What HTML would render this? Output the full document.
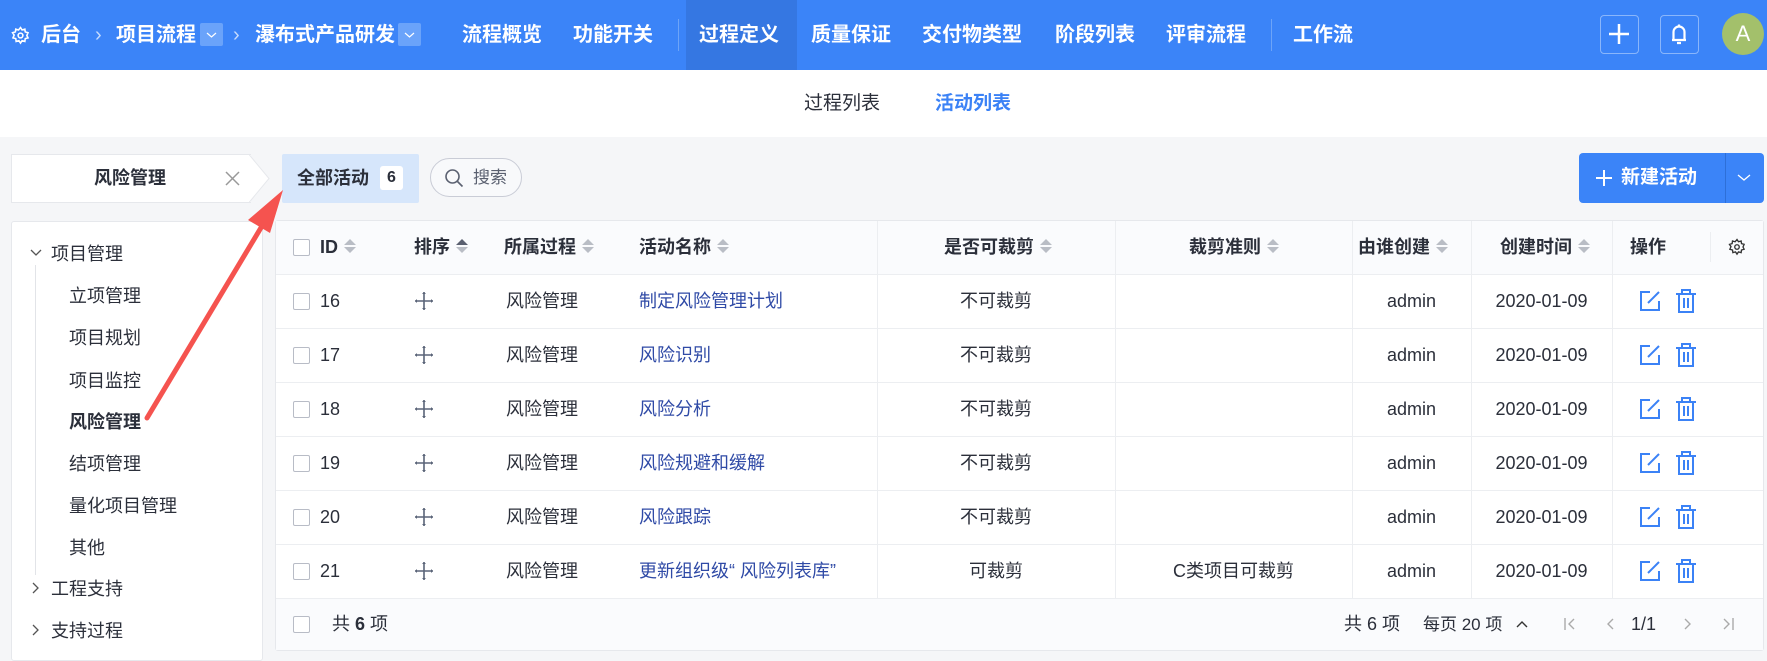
<!DOCTYPE html>
<html><head><meta charset="utf-8"><style>
*{box-sizing:border-box;margin:0;padding:0}
body{width:1767px;height:654px;overflow:hidden;background:#f5f6f8;font-family:"Liberation Sans","Noto Sans CJK SC",sans-serif;color:#2b2f3a;position:relative}
.abs{position:absolute;white-space:nowrap}
.hdr{position:absolute;left:0;top:0;width:1767px;height:70px;background:#3b84f8}
.hdr .t{position:absolute;top:0;line-height:70px;color:#fff;font-size:20px;font-weight:bold}
.dd{position:absolute;top:23px;width:23px;height:23px;background:#6aa3fa;border-radius:2px}
.sep{position:absolute;top:19px;width:1px;height:32px;background:#6da4f8}
.sub{position:absolute;left:0;top:70px;width:1767px;height:67px;background:#fff}
.panel{position:absolute;background:#fff;border:1px solid #e6e8ec;border-radius:3px}
.cell{position:absolute;font-size:18px;line-height:54px;white-space:nowrap}
.th{font-weight:bold;color:#2b2f3a}
.cb{position:absolute;width:17px;height:17px;border:1px solid #b8bcc6;border-radius:2px;background:#fff}
.sort{display:inline-block;vertical-align:middle;margin-left:5px;width:14px;height:20px;position:relative;top:-2px}
.hl{position:absolute;left:276px;width:1487px;height:1px;background:#eceef1}
.vl{position:absolute;width:1px;background:#eceef1}
.link{color:#2f4aa6}
.tree{position:absolute;font-size:18px;white-space:nowrap}
</style></head><body>
<div class="hdr">
  <svg class="abs" style="left:11px;top:26px" width="19" height="19" viewBox="0 0 24 24" fill="none" stroke="#fff" stroke-width="2"><circle cx="12" cy="12" r="3"/><path d="M12 2l2 3 3.5-1 .5 3.5 3.5 1-1.5 3.5 1.5 3-3.5 1-.5 3.5-3.5-1-2 3-2-3-3.5 1-.5-3.5-3.5-1 1.5-3.5L2 8.5l3.5-1L6 4l3.5 1z"/></svg>
  <div class="t" style="left:41px">后台</div>
  <div class="t" style="left:95px;font-weight:normal;color:#c6dbfd">›</div>
  <div class="t" style="left:116px">项目流程</div>
  <div class="dd" style="left:200px"><svg width="23" height="23"><path d="M7 10l4.5 4 4.5-4" stroke="#fff" fill="none" stroke-width="1.2"/></svg></div>
  <div class="t" style="left:233px;font-weight:normal;color:#c6dbfd">›</div>
  <div class="t" style="left:255px">瀑布式产品研发</div>
  <div class="dd" style="left:398px"><svg width="23" height="23"><path d="M7 10l4.5 4 4.5-4" stroke="#fff" fill="none" stroke-width="1.2"/></svg></div>
  <div class="t" style="left:462px">流程概览</div>
  <div class="t" style="left:573px">功能开关</div>
  <div class="sep" style="left:678px"></div>
  <div class="abs" style="left:686px;top:0;width:111px;height:70px;background:#3577e2"></div>
  <div class="t" style="left:699px">过程定义</div>
  <div class="t" style="left:811px">质量保证</div>
  <div class="t" style="left:922px">交付物类型</div>
  <div class="t" style="left:1055px">阶段列表</div>
  <div class="t" style="left:1166px">评审流程</div>
  <div class="sep" style="left:1271px"></div>
  <div class="t" style="left:1293px">工作流</div>
  <div class="abs" style="left:1600px;top:15px;width:39px;height:39px;border:1.5px solid #8ab6fb;border-radius:4px"><svg width="36" height="36"><path d="M18 8v20M8 18h20" stroke="#fff" stroke-width="2.5"/></svg></div>
  <div class="abs" style="left:1660px;top:15px;width:39px;height:39px;border:1.5px solid #8ab6fb;border-radius:4px"><svg width="36" height="36" fill="none" stroke="#fff" stroke-width="2.2"><path d="M11 24h14M12.5 24v-8a5.5 5.5 0 0 1 11 0v8M18 8.5v2M16 27h4"/></svg></div>
  <div class="abs" style="left:1722px;top:13px;width:42px;height:42px;border-radius:50%;background:#a3c06b;color:#fff;font-size:22px;line-height:42px;text-align:center">A</div>
</div>
<div class="sub">
  <div class="abs" style="left:804px;top:0;line-height:67px;font-size:19px;color:#2b2f3a">过程列表</div>
  <div class="abs" style="left:935px;top:0;line-height:67px;font-size:19px;color:#3b82f6;font-weight:bold">活动列表</div>
</div>
<div class="abs" style="left:11px;top:154px;width:240px;height:49px;background:#fff;border:1px solid #e6e8ec;border-right:none"></div>
<svg class="abs" style="left:249px;top:154px" width="22" height="49"><path d="M0 0.5L20 24.5L0 48.5" fill="#fff" stroke="#e6e8ec"/></svg>
<div class="abs" style="left:94px;top:154px;line-height:49px;font-size:18px;font-weight:bold">风险管理</div>
<svg class="abs" style="left:225px;top:171px" width="15" height="15"><path d="M1 1l13 13M14 1L1 14" stroke="#999" stroke-width="1.5"/></svg>
<div class="abs" style="left:282px;top:154px;width:137px;height:49px;background:#d6e6fb;border-radius:2px"></div>
<div class="abs" style="left:297px;top:154px;line-height:49px;font-size:18px;font-weight:bold">全部活动</div>
<div class="abs" style="left:380px;top:166px;width:23px;height:24px;background:#fff;border-radius:3px;font-size:16px;font-weight:bold;text-align:center;line-height:24px">6</div>
<div class="abs" style="left:430px;top:158px;width:92px;height:39px;border:1.5px solid #c9ccd6;border-radius:20px;background:#f8f9fb"></div>
<svg class="abs" style="left:444px;top:168px" width="20" height="20" fill="none" stroke="#5a6070" stroke-width="1.6"><circle cx="8.5" cy="8.5" r="6.5"/><path d="M13.5 13.5l5 5"/></svg>
<div class="abs" style="left:473px;top:158px;line-height:39px;font-size:17px;color:#5a6070">搜索</div>
<div class="abs" style="left:1579px;top:153px;width:185px;height:50px;background:#3b84f8;border-radius:4px"></div>
<div class="abs" style="left:1725px;top:153px;width:1px;height:50px;background:#2d6fd8"></div>
<svg class="abs" style="left:1594px;top:168px" width="20" height="20"><path d="M10 2v16M2 10h16" stroke="#fff" stroke-width="2"/></svg>
<div class="abs" style="left:1621px;top:153px;line-height:50px;color:#fff;font-size:19px;font-weight:bold">新建活动</div>
<svg class="abs" style="left:1736px;top:172px" width="16" height="12"><path d="M2 3l6 5 6-5" stroke="#fff" fill="none" stroke-width="1.3"/></svg>
<div class="panel" style="left:11px;top:221px;width:252px;height:440px"></div>
<svg class="abs" style="left:29px;top:247px" width="14" height="12"><path d="M2 3l5 5 5-5" stroke="#555" fill="none" stroke-width="1.3"/></svg>
<div class="abs" style="left:35px;top:265px;width:1px;height:310px;background:#e2e4e8"></div>
<div class="tree" style="left:51px;top:240px">项目管理</div>
<div class="tree" style="left:69px;top:282px">立项管理</div>
<div class="tree" style="left:69px;top:324px">项目规划</div>
<div class="tree" style="left:69px;top:367px">项目监控</div>
<div class="tree" style="left:69px;top:408px;font-weight:bold">风险管理</div>
<div class="tree" style="left:69px;top:450px">结项管理</div>
<div class="tree" style="left:69px;top:492px">量化项目管理</div>
<div class="tree" style="left:69px;top:534px">其他</div>
<svg class="abs" style="left:30px;top:581px" width="12" height="14"><path d="M3 2l5 5-5 5" stroke="#555" fill="none" stroke-width="1.3"/></svg>
<div class="tree" style="left:51px;top:575px">工程支持</div>
<svg class="abs" style="left:30px;top:623px" width="12" height="14"><path d="M3 2l5 5-5 5" stroke="#555" fill="none" stroke-width="1.3"/></svg>
<div class="tree" style="left:51px;top:617px">支持过程</div>
<div class="panel" style="left:275px;top:220px;width:1489px;height:431px"></div>
<div class="abs" style="left:276px;top:221px;width:1487px;height:53px;background:#fafbfd"></div>
<div class="abs" style="left:276px;top:598px;width:1487px;height:52px;background:#fafbfd"></div>
<div class="hl" style="top:274px"></div><div class="hl" style="top:328px"></div><div class="hl" style="top:382px"></div><div class="hl" style="top:436px"></div><div class="hl" style="top:490px"></div><div class="hl" style="top:544px"></div><div class="hl" style="top:598px"></div>
<div class="vl" style="left:877px;top:221px;height:377px"></div>
<div class="vl" style="left:1115px;top:221px;height:377px"></div>
<div class="vl" style="left:1352px;top:221px;height:377px"></div>
<div class="vl" style="left:1471px;top:221px;height:377px"></div>
<div class="vl" style="left:1612px;top:221px;height:377px"></div>
<div class="vl" style="left:1710px;top:232px;height:30px"></div>
<div class="cb" style="left:293px;top:239px"></div>
<div class="cell th" style="left:320px;top:220px">ID<svg class="sort" viewBox="0 0 14 20"><path d="M1 9l6-6 6 6zM1 11l6 6 6-6z" fill="#b9bdc5"/></svg></div>
<div class="cell th" style="left:414px;top:220px">排序<svg class="sort" viewBox="0 0 14 20"><path d="M1 9l6-6 6 6z" fill="#5a6070"/><path d="M1 11l6 6 6-6z" fill="#b9bdc5"/></svg></div>
<div class="cell th" style="left:504px;top:220px">所属过程<svg class="sort" viewBox="0 0 14 20"><path d="M1 9l6-6 6 6zM1 11l6 6 6-6z" fill="#b9bdc5"/></svg></div>
<div class="cell th" style="left:639px;top:220px">活动名称<svg class="sort" viewBox="0 0 14 20"><path d="M1 9l6-6 6 6zM1 11l6 6 6-6z" fill="#b9bdc5"/></svg></div>
<div class="cell th" style="left:944px;top:220px">是否可裁剪<svg class="sort" viewBox="0 0 14 20"><path d="M1 9l6-6 6 6zM1 11l6 6 6-6z" fill="#b9bdc5"/></svg></div>
<div class="cell th" style="left:1189px;top:220px">裁剪准则<svg class="sort" viewBox="0 0 14 20"><path d="M1 9l6-6 6 6zM1 11l6 6 6-6z" fill="#b9bdc5"/></svg></div>
<div class="cell th" style="left:1358px;top:220px">由谁创建<svg class="sort" viewBox="0 0 14 20"><path d="M1 9l6-6 6 6zM1 11l6 6 6-6z" fill="#b9bdc5"/></svg></div>
<div class="cell th" style="left:1500px;top:220px">创建时间<svg class="sort" viewBox="0 0 14 20"><path d="M1 9l6-6 6 6zM1 11l6 6 6-6z" fill="#b9bdc5"/></svg></div>
<div class="cell th" style="left:1630px;top:220px">操作</div>
<svg class="abs" style="left:1728px;top:238px" width="18" height="18" viewBox="0 0 24 24" fill="none" stroke="#333" stroke-width="1.8"><circle cx="12" cy="12" r="3"/><path d="M12 2l2 3 3.5-1 .5 3.5 3.5 1-1.5 3.5 1.5 3-3.5 1-.5 3.5-3.5-1-2 3-2-3-3.5 1-.5-3.5-3.5-1 1.5-3.5L2 8.5l3.5-1L6 4l3.5 1z"/></svg>
<script>
var rows=[["16","制定风险管理计划","不可裁剪",""],["17","风险识别","不可裁剪",""],["18","风险分析","不可裁剪",""],["19","风险规避和缓解","不可裁剪",""],["20","风险跟踪","不可裁剪",""],["21","更新组织级“ 风险列表库”","可裁剪","C类项目可裁剪"]];
var h="";
rows.forEach(function(r,i){var y=274+i*54;
h+='<div class="cb" style="left:293px;top:'+(y+19)+'px"></div>';
h+='<div class="cell" style="left:320px;top:'+y+'px">'+r[0]+'</div>';
h+='<svg class="abs" style="left:414px;top:'+(y+17)+'px" width="20" height="20"><path d="M10 1v18M1 10h18" stroke="#5a6478" stroke-width="1.6"/><path d="M10 1l-2 2h4zM10 19l-2-2h4zM1 10l2-2v4zM19 10l-2-2v4z" fill="#5a6478"/></svg>';
h+='<div class="cell" style="left:506px;top:'+y+'px">风险管理</div>';
h+='<div class="cell link" style="left:639px;top:'+y+'px">'+r[1]+'</div>';
h+='<div class="cell" style="left:877px;width:238px;text-align:center;top:'+y+'px">'+r[2]+'</div>';
h+='<div class="cell" style="left:1115px;width:237px;text-align:center;top:'+y+'px">'+r[3]+'</div>';
h+='<div class="cell" style="left:1352px;width:119px;text-align:center;top:'+y+'px">admin</div>';
h+='<div class="cell" style="left:1471px;width:141px;text-align:center;top:'+y+'px">2020-01-09</div>';
h+='<svg class="abs" style="left:1638px;top:'+(y+15)+'px" width="24" height="24" fill="none" stroke="#3b82f6" stroke-width="2"><path d="M12 3H3v18h18v-9"/><path d="M10 14L21 3"/></svg>';
h+='<svg class="abs" style="left:1674px;top:'+(y+14)+'px" width="24" height="26" fill="none" stroke="#3b82f6" stroke-width="2"><path d="M2 6h20M8 6V2h8v4M5 6v18h14V6M10 10v10M14 10v10"/></svg>';
});
document.write(h);
</script>
<div class="cb" style="left:293px;top:616px"></div>
<div class="abs" style="left:332px;top:598px;line-height:53px;font-size:18px">共 <b>6</b> 项</div>
<div class="abs" style="left:1344px;top:598px;line-height:53px;font-size:18px">共 6 项</div>
<div class="abs" style="left:1423px;top:598px;line-height:53px;font-size:17px">每页 20 项</div>
<svg class="abs" style="left:1515px;top:618px" width="14" height="12"><path d="M2 9l5-5 5 5" stroke="#333" fill="none" stroke-width="1.4"/></svg>
<svg class="abs" style="left:1562px;top:616px" width="16" height="16"><path d="M3 2v12M12 3L7 8l5 5" stroke="#aaa" fill="none" stroke-width="1.4"/></svg>
<svg class="abs" style="left:1604px;top:616px" width="14" height="16"><path d="M9 3L4 8l5 5" stroke="#aaa" fill="none" stroke-width="1.4"/></svg>
<div class="abs" style="left:1631px;top:598px;line-height:53px;font-size:18px">1/1</div>
<svg class="abs" style="left:1680px;top:616px" width="14" height="16"><path d="M5 3l5 5-5 5" stroke="#aaa" fill="none" stroke-width="1.4"/></svg>
<svg class="abs" style="left:1720px;top:616px" width="16" height="16"><path d="M4 3l5 5-5 5M13 2v12" stroke="#aaa" fill="none" stroke-width="1.4"/></svg>
<svg class="abs" style="left:0;top:0" width="1767" height="654"><path d="M147 418L262 226" stroke="#f5534f" stroke-width="5" stroke-linecap="round"/><path d="M283 190L248 220L270 233z" fill="#f5534f"/></svg>
</body></html>
